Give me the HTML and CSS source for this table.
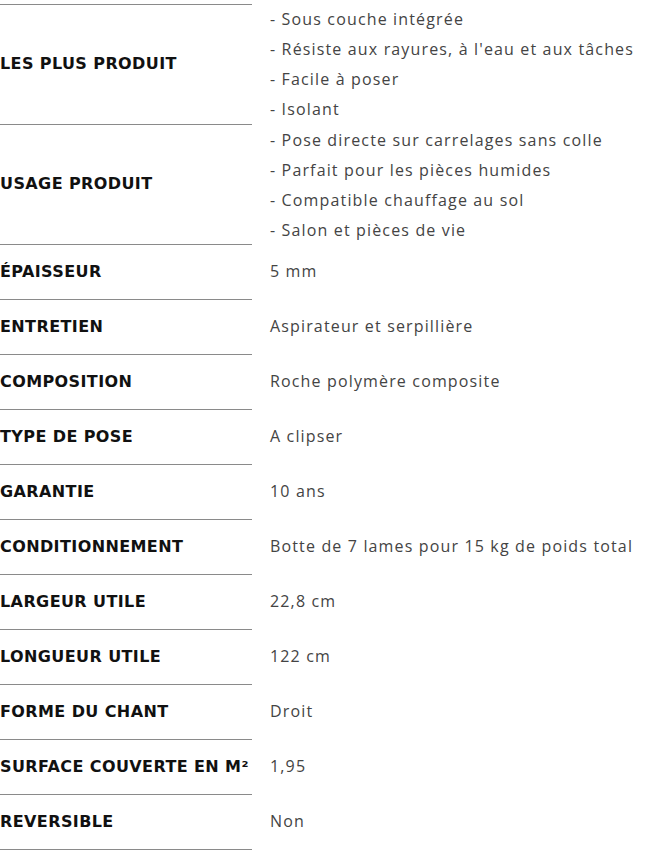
FILE: index.html
```html
<!DOCTYPE html>
<html lang="fr">
<head>
<meta charset="utf-8">
<title>Caractéristiques</title>
<link rel="stylesheet" href="styles.css">
</head>
<body>
<div class="specs">
  <div class="label first">LES PLUS PRODUIT</div>
  <ul class="value list first-v">
    <li>- Sous couche intégrée</li>
    <li>- Résiste aux rayures, à l'eau et aux tâches</li>
    <li>- Facile à poser</li>
    <li>- Isolant</li>
  </ul>
  <div class="label">USAGE PRODUIT</div>
  <ul class="value list">
    <li>- Pose directe sur carrelages sans colle</li>
    <li>- Parfait pour les pièces humides</li>
    <li>- Compatible chauffage au sol</li>
    <li>- Salon et pièces de vie</li>
  </ul>
  <div class="label">ÉPAISSEUR</div><div class="value">5 mm</div>
  <div class="label">ENTRETIEN</div><div class="value">Aspirateur et serpillière</div>
  <div class="label">COMPOSITION</div><div class="value">Roche polymère composite</div>
  <div class="label">TYPE DE POSE</div><div class="value">A clipser</div>
  <div class="label">GARANTIE</div><div class="value">10 ans</div>
  <div class="label">CONDITIONNEMENT</div><div class="value">Botte de 7 lames pour 15 kg de poids total</div>
  <div class="label">LARGEUR UTILE</div><div class="value">22,8 cm</div>
  <div class="label">LONGUEUR UTILE</div><div class="value">122 cm</div>
  <div class="label">FORME DU CHANT</div><div class="value">Droit</div>
  <div class="label">SURFACE COUVERTE EN M²</div><div class="value">1,95</div>
  <div class="label">REVERSIBLE</div><div class="value">Non</div>
</div>
</body>
</html>
```
FILE: styles.css
```css
html, body {
  margin: 0;
  padding: 0;
  background: #ffffff;
}
body {
  font-family: "Open Sans", "Liberation Sans", sans-serif;
  font-size: 16px;
}
.specs {
  display: grid;
  grid-template-columns: 252px 1fr;
  padding-top: 4px;
}
.label {
  box-sizing: border-box;
  display: flex;
  align-items: center;
  min-height: 55px;
  padding-bottom: 2px;
  border-bottom: 1px solid #8a8a8a;
  font-family: "DejaVu Sans", "Open Sans", sans-serif;
  font-size: 16px;
  font-weight: 700;
  letter-spacing: 0.4px;
  color: #111;
  white-space: nowrap;
}
.label.first {
  border-top: 1px solid #8a8a8a;
}
.value {
  box-sizing: border-box;
  display: flex;
  align-items: center;
  padding-left: 18px;
  padding-bottom: 3px;
  color: #444;
  letter-spacing: 1.15px;
  white-space: nowrap;
}
.list {
  display: block;
  list-style: none;
  margin: 0;
  padding-top: 0;
  padding-bottom: 0;
}
.list.first-v {
  padding-bottom: 1px;
}
.list li {
  line-height: 30px;
}
```
